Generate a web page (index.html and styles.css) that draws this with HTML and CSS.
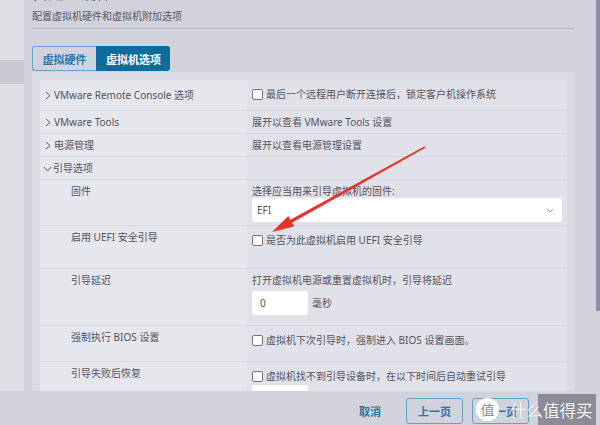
FILE: index.html
```html
<!DOCTYPE html>
<html lang="zh-CN">
<head>
    <meta charset="UTF-8">
    <meta name="viewport" content="width=device-width, initial-scale=1.0">
    <title>自定义硬件</title>
    <link rel="stylesheet" href="styles.css">
</head>
<body>
    <div class="screen">
        <div class="top">
            <div class="sidebar">
                <div class="sidebar-item"></div>
            </div>
            <div class="dialog">
                <h3 class="title">自定义硬件</h3>
                <p class="subtitle">配置虚拟机硬件和虚拟机附加选项</p>
                <div class="tabs">
                    <button class="tab">虚拟硬件</button>
                    <button class="tab active">虚拟机选项</button>
                </div>
                <div class="panel">
                    <div class="table">
                        <div class="row r-console">
                            <div class="cell left mid">
                                <svg class="chev" width="6" height="9" viewBox="0 0 6 9"><polyline points="1,1 5,4.5 1,8"/></svg>VMware Remote Console 选项
                            </div>
                            <div class="cell right check">
                                <span class="box"></span>最后一个远程用户断开连接后，锁定客户机操作系统
                            </div>
                        </div>
                        <div class="row r-sm">
                            <div class="cell left">
                                <svg class="chev" width="6" height="9" viewBox="0 0 6 9"><polyline points="1,1 5,4.5 1,8"/></svg>VMware Tools
                            </div>
                            <div class="cell right">展开以查看 VMware Tools 设置</div>
                        </div>
                        <div class="row r-sm">
                            <div class="cell left">
                                <svg class="chev" width="6" height="9" viewBox="0 0 6 9"><polyline points="1,1 5,4.5 1,8"/></svg>电源管理
                            </div>
                            <div class="cell right">展开以查看电源管理设置</div>
                        </div>
                        <div class="row r-sm">
                            <div class="cell left">
                                <svg class="chev down" width="9" height="6" viewBox="0 0 9 6"><polyline points="1,1 4.5,5 8,1"/></svg>引导选项
                            </div>
                            <div class="cell right"></div>
                        </div>
                        <div class="row r-firmware">
                            <div class="cell left sub">固件</div>
                            <div class="cell right">
                                <div class="label">选择应当用来引导虚拟机的固件:</div>
                                <div class="select">EFI
                                    <svg class="select-arrow" width="8" height="5" viewBox="0 0 8 5"><polyline points="1,1 4,4 7,1"/></svg>
                                </div>
                            </div>
                        </div>
                        <div class="row r-uefi">
                            <div class="cell left sub">启用 UEFI 安全引导</div>
                            <div class="cell right check">
                                <span class="box"></span>是否为此虚拟机启用 UEFI 安全引导
                            </div>
                        </div>
                        <div class="row r-delay">
                            <div class="cell left sub">引导延迟</div>
                            <div class="cell right">
                                <div class="label">打开虚拟机电源或重置虚拟机时，引导将延迟</div>
                                <div class="inline">
                                    <div class="input">0</div>
                                    <span class="unit">毫秒</span>
                                </div>
                            </div>
                        </div>
                        <div class="row r-bios">
                            <div class="cell left sub">强制执行 BIOS 设置</div>
                            <div class="cell right check">
                                <span class="box"></span>虚拟机下次引导时，强制进入 BIOS 设置画面。
                            </div>
                        </div>
                        <div class="row r-retry">
                            <div class="cell left sub">引导失败后恢复</div>
                            <div class="cell right check">
                                <span class="box"></span>虚拟机找不到引导设备时，在以下时间后自动重试引导
                                <div class="input retry-input"></div>
                            </div>
                        </div>
                    </div>
                </div>
            </div>
        </div>
        <div class="footer">
            <button class="link-btn">取消</button>
            <button class="btn">上一页</button>
            <button class="btn">下一页</button>
        </div>
    </div>

    <div class="scrollbar"></div>

    <svg class="arrow" width="600" height="425" viewBox="0 0 600 425">
        <polygon points="272,232 288.3,216.1 290.4,219.8 424.6,146.3 425.4,147.7 292,222.8 294.1,226.5"/>
    </svg>

    <div class="watermark">
        <span class="wm-logo">值</span>
        <span class="wm-box"></span>
        <span class="wm-text">什么值得买</span>
    </div>
</body>
</html>
```

FILE: styles.css
```css
*{
    margin: 0;
    padding: 0;
    box-sizing: border-box;
}
body{
    width: 600px;
    height: 425px;
    overflow: hidden;
    background-color: #d2d2dc;
    font-family: "Noto Sans", "Noto Sans CJK SC", sans-serif;
    font-size: 10px;
    color: #53535d;
    position: relative;
}
.screen{
    display: flex;
    flex-direction: column;
    height: 425px;
    overflow: hidden;
}
.top{
    display: flex;
    height: 391px;
    flex-shrink: 0;
    overflow: hidden;
}
.sidebar{
    width: 24px;
    background-color: #dedee5;
    padding-top: 60px;
}
.sidebar-item{
    height: 24px;
    background-color: #c9c9d1;
}
.dialog{
    flex: 1;
    padding: 0 25px 0 8px;
    display: flex;
    flex-direction: column;
}
.title{
    margin-top: -17px;
    font-size: 16px;
    line-height: 20px;
    font-weight: 400;
    color: #3a3a44;
}
.subtitle{
    margin-top: 6px;
    line-height: 14px;
    color: #585862;
    padding-bottom: 5px;
    border-bottom: 1px solid #b2b2c0;
}
.tabs{
    display: flex;
    margin-top: 17px;
}
.tab{
    height: 25px;
    width: 64px;
    font-family: inherit;
    font-size: 11px;
    font-weight: 700;
    color: #2d76a8;
    background-color: transparent;
    border: 1px solid #67a4c8;
    border-right: none;
    border-radius: 3px 0 0 3px;
}
.tab.active{
    width: 74px;
    color: #fff;
    background-color: #0e6c9c;
    border-color: #0e6c9c;
    border-radius: 0 3px 3px 0;
}
.panel{
    flex: 1;
    margin-top: 1px;
    background-color: #dbdbe5;
    padding: 8px 8px 0 8px;
}
.row{
    display: flex;
    border-bottom: 1px solid #d6d6e0;
}
.cell{
    padding: 4px 5px;
    line-height: 15px;
}
.left{
    width: 207px;
    background-color: #e6e6ed;
    display: flex;
    align-items: flex-start;
}
.left.mid{
    padding-top: 8px;
}
.left.sub{
    padding-left: 31px;
}
.right{
    flex: 1;
    background-color: #e1e1e9;
}
.right.check{
    padding-top: 7px;
}
.chev{
    fill: none;
    stroke: #5a5a64;
    stroke-width: 1;
    margin: 3px 3px 0 0;
    flex-shrink: 0;
}
.chev.down{
    margin: 5px 1px 0 -2px;
}
.r-console{ height: 31px; }
.r-sm{ height: 23px; }
.r-firmware{ height: 46px; }
.r-uefi{ height: 43px; }
.r-delay{ height: 57px; }
.r-bios{ height: 36px; }
.r-retry{ height: 60px; }
.box{
    display: inline-block;
    width: 11px;
    height: 11px;
    background-color: #fff;
    border: 1px solid #74747e;
    border-radius: 2px;
    vertical-align: -2px;
    margin-right: 3px;
}
.label{
    line-height: 14px;
}
.select{
    position: relative;
    height: 24px;
    background-color: #fff;
    border-radius: 3px;
    padding-left: 5px;
    line-height: 24px;
}
.select-arrow{
    position: absolute;
    right: 8px;
    top: 10px;
    fill: none;
    stroke: #8a8a94;
    stroke-width: 1;
}
.inline{
    display: flex;
    align-items: center;
    margin-top: 4px;
}
.input{
    width: 56px;
    height: 24px;
    background-color: #fff;
    border-radius: 3px;
    padding-left: 8px;
    line-height: 24px;
}
.unit{
    margin-left: 4px;
}
.retry-input{
    margin-top: 1px;
}
.footer{
    flex: 1;
    display: flex;
    align-items: center;
    padding: 5px 0 0 343px;
    gap: 9px;
}
.link-btn{
    width: 54px;
    background: none;
    border: none;
    font-family: inherit;
    font-size: 11px;
    font-weight: 700;
    color: #2c72a4;
}
.btn{
    width: 57px;
    height: 26px;
    background: none;
    border: 1px solid #62a0c6;
    border-radius: 3px;
    font-family: inherit;
    font-size: 11px;
    font-weight: 700;
    color: #2c72a4;
}
.scrollbar{
    position: absolute;
    right: 0;
    top: 0;
    width: 4px;
    height: 311px;
    background-color: #8e8ca8;
}
.arrow{
    display: block;
    position: absolute;
    left: 0;
    top: 0;
    pointer-events: none;
}
.arrow polygon{
    fill: #e8322a;
}
.watermark{
    position: absolute;
    left: 475px;
    top: 394px;
    width: 125px;
    height: 31px;
}
.wm-logo{
    position: absolute;
    left: 1px;
    top: 4px;
    width: 23px;
    height: 23px;
    border-radius: 50%;
    background-color: #fff;
    color: #8a8a94;
    font-family: "Noto Sans CJK SC", sans-serif;
    font-size: 14px;
    line-height: 23px;
    text-align: center;
}
.wm-box{
    position: absolute;
    left: 63px;
    top: 0;
    width: 58px;
    height: 31px;
    background-color: #8c8c96;
}
.wm-text{
    position: absolute;
    left: 35px;
    top: 2px;
    font-family: "Noto Sans CJK SC", sans-serif;
    font-size: 16.5px;
    line-height: 28px;
    color: #fff;
    text-shadow: 0 0 1px rgba(0, 0, 0, 0.35);
}
```
